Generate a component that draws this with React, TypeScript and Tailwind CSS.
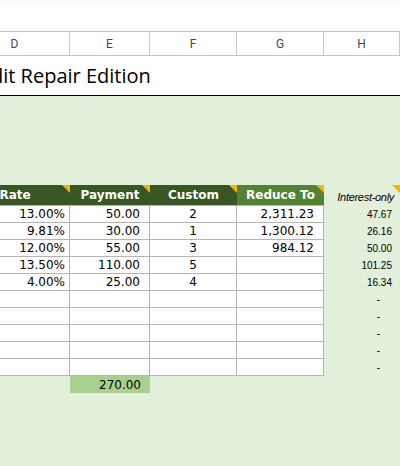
import type { JSX } from "react";

type Row = {
	rate: string;
	payment: string;
	custom: string;
	reduce: string;
	interest: string;
};

const rows: Row[] = [
	{ rate: "13.00%", payment: "50.00", custom: "2", reduce: "2,311.23", interest: "47.67" },
	{ rate: "9.81%", payment: "30.00", custom: "1", reduce: "1,300.12", interest: "26.16" },
	{ rate: "12.00%", payment: "55.00", custom: "3", reduce: "984.12", interest: "50.00" },
	{ rate: "13.50%", payment: "110.00", custom: "5", reduce: "", interest: "101.25" },
	{ rate: "4.00%", payment: "25.00", custom: "4", reduce: "", interest: "16.34" },
	{ rate: "", payment: "", custom: "", reduce: "", interest: "-" },
	{ rate: "", payment: "", custom: "", reduce: "", interest: "-" },
	{ rate: "", payment: "", custom: "", reduce: "", interest: "-" },
	{ rate: "", payment: "", custom: "", reduce: "", interest: "-" },
	{ rate: "", payment: "", custom: "", reduce: "", interest: "-" },
];

function Flag(): JSX.Element {
	return <span className="absolute right-0 top-0 h-[8px] w-[8px] bg-[#f2b600] [clip-path:polygon(0_0,100%_0,100%_100%)]" />;
}

const letters = [
	{ label: "D", w: "w-[110px]" },
	{ label: "E", w: "w-[80px]" },
	{ label: "F", w: "w-[87px]" },
	{ label: "G", w: "w-[87px]" },
	{ label: "H", w: "w-[76px]" },
];

export default function App(): JSX.Element {
	return (
		<div className="h-[466px] w-[400px] overflow-hidden bg-[#e2efda]">
			<div className="h-[5px] bg-[#f8f9fa]" />
			<div className="h-[26px] bg-white" />

			{/* column letters */}
			<div className="flex h-[25px] bg-white border-y border-[#c6c6c6] ml-[-40px] font-['Roboto',sans-serif] text-[12px] text-[#444746]">
				{letters.map((l) => (
					<div className={`${l.w} shrink-0 flex items-center justify-center border-r border-[#c6c6c6]`} key={l.label}>
						{l.label}
					</div>
				))}
				<div className="flex-1" />
			</div>

			{/* title, clipped on the left like the sheet */}
			<div className="flex h-[40px] items-center bg-white border-b border-black ml-[-41px] pt-[1px] whitespace-nowrap font-['Open_Sans',sans-serif] text-[20px] text-black">
				Credit Repair Edition
			</div>

			<div className="h-[89px]" />

			{/* table header */}
			<div className="flex h-[21px] ml-[-40px] font-['DejaVu_Sans',sans-serif] text-[12px] font-bold text-white">
				<div className="relative w-[110px] shrink-0 flex items-center justify-center bg-[#375623] border-b border-[#b4b4b4]">
					Rate
					<Flag />
				</div>
				<div className="relative w-[80px] shrink-0 flex items-center justify-center bg-[#375623] border-b border-[#b4b4b4]">
					Payment
					<Flag />
				</div>
				<div className="relative w-[87px] shrink-0 flex items-center justify-center bg-[#375623] border-b border-[#b4b4b4]">
					Custom
					<Flag />
				</div>
				<div className="relative w-[87px] shrink-0 flex items-center justify-center bg-[#548235] border-b border-[#b4b4b4]">
					Reduce To
					<Flag />
				</div>
				<div className="relative w-[76px] shrink-0 flex items-end justify-end pr-[6px] pb-[1px] font-['Liberation_Sans',sans-serif] text-[11px] font-normal italic tracking-[-0.3px] text-black">
					Interest-only
					<Flag />
				</div>
			</div>

			{/* rows */}
			{rows.map((r, i) => (
				<div className="flex h-[17px] ml-[-40px] font-['DejaVu_Sans',sans-serif] text-[12px] text-black" key={i}>
					<div className="w-[110px] shrink-0 flex items-center justify-end pr-[4px] bg-white border-r border-b border-[#b4b4b4]">{r.rate}</div>
					<div className="w-[80px] shrink-0 flex items-center justify-end pr-[9px] bg-white border-r border-b border-[#b4b4b4]">{r.payment}</div>
					<div className="w-[87px] shrink-0 flex items-center justify-center bg-white border-r border-b border-[#b4b4b4]">{r.custom}</div>
					<div className="w-[87px] shrink-0 flex items-center justify-end pr-[9px] bg-white border-r border-b border-[#b4b4b4]">{r.reduce}</div>
					<div
						className={`w-[76px] shrink-0 flex items-center justify-end font-['Liberation_Sans',sans-serif] text-[10px] ${r.interest === "-" ? "pr-[20px]" : "pr-[8px]"}`}
					>
						{r.interest}
					</div>
				</div>
			))}

			{/* total */}
			<div className="flex h-[17px] ml-[-40px] font-['DejaVu_Sans',sans-serif] text-[12px] text-black">
				<div className="w-[110px] shrink-0" />
				<div className="w-[80px] shrink-0 flex items-center justify-end pr-[9px] bg-[#a9d08e]">270.00</div>
			</div>
		</div>
	);
}
